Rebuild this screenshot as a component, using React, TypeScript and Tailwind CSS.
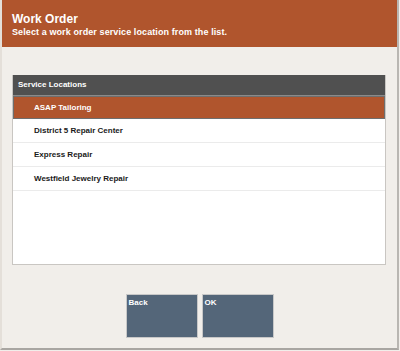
const locations = [
  "ASAP Tailoring",
  "District 5 Repair Center",
  "Express Repair",
  "Westfield Jewelry Repair",
];

export default function App() {
  const selected = 0;
  return (
    <div className="w-[400px] h-[351px] bg-[#f1eeea] font-['Liberation_Sans',Arial,sans-serif]">
      <div className="w-[399px] h-[350px] flex flex-col border-r-2 border-b-2 border-r-[#b9b6b2] border-b-[#a9a6a2] border-l-2 border-l-[#e4dfd9]">
        <div className="h-[47px] bg-[#b0552d] text-white px-[10px] pt-[12px]">
          <div className="text-[12px] leading-[14px] font-bold">Work Order</div>
          <div className="text-[9px] leading-[12px] font-bold tracking-[0.1px]">
            Select a work order service location from the list.
          </div>
        </div>

        <div className="mt-[28px] ml-[10px] w-[374px] h-[190px] bg-white border border-[#c9c6c2] border-t-0 flex flex-col">
          <div className="h-[21px] bg-[#505050] border-b border-[#8a8a8a] text-white text-[8px] font-bold flex items-center px-[5px]">
            Service Locations
          </div>
          {locations.map((loc, i) => (
            <div
              key={loc}
              className={
                i === selected
                  ? "h-[23px] bg-[#b0552d] border border-[#6e6e6e] text-white text-[8px] font-bold flex items-center pl-[20px]"
                  : "h-[24px] border-b border-[#ebebeb] text-[#1a1a1a] text-[8px] font-bold flex items-center pl-[21px]"
              }
            >
              {loc}
            </div>
          ))}
        </div>

        <div className="mt-[29px] flex justify-center gap-[4px]">
          <button className="w-[72px] h-[44px] bg-[#546679] border border-[#c8c8c8] text-white text-[8px] font-bold text-left flex items-start px-[2px] pt-[2px]">
            Back
          </button>
          <button className="w-[72px] h-[44px] bg-[#546679] border border-[#c8c8c8] text-white text-[8px] font-bold text-left flex items-start px-[2px] pt-[2px]">
            OK
          </button>
        </div>
      </div>
    </div>
  );
}
